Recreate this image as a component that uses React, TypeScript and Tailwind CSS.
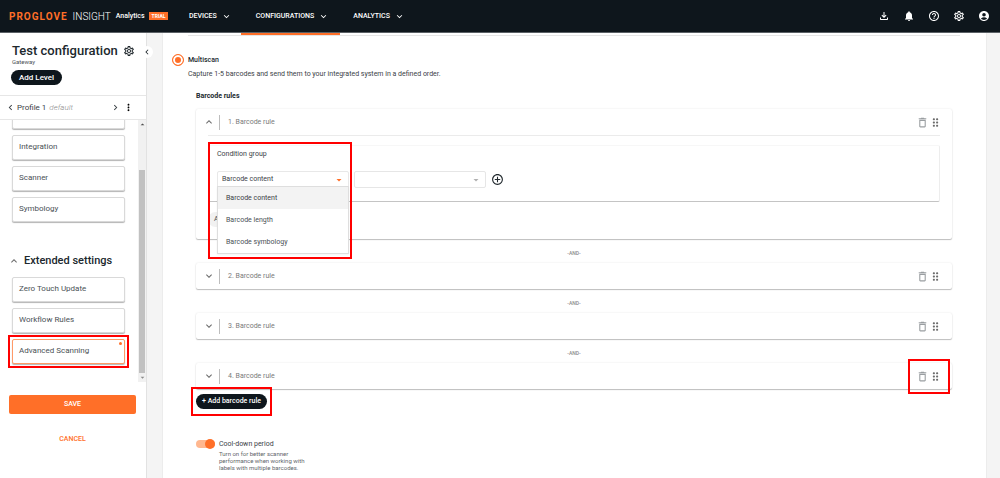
import { useState } from 'react';
import {
  MdAccountCircle,
  MdAddCircleOutline,
  MdArrowDropDown,
  MdArrowDropUp,
  MdChevronLeft,
  MdChevronRight,
  MdDeleteOutline,
  MdDragIndicator,
  MdExpandLess,
  MdExpandMore,
  MdHelpOutline,
  MdMoreVert,
  MdNotifications,
  MdOutlineFileDownload,
  MdOutlineSettings,
} from 'react-icons/md';

const conditionTypes = ['Barcode content', 'Barcode length', 'Barcode symbology'];

const Header = () => (
  <header className="flex h-[33px] shrink-0 items-center border-b border-[#5b6166] bg-[#0e161c] pr-[10px] pl-[9px] text-white">
    <a href="#home" className="flex w-[180px] items-center">
      <span className="text-[10px] font-bold tracking-widest text-[#ff6f28]">PROGLOVE</span>
      <span className="ml-[5px] text-[10px] font-light">INSIGHT</span>
      <span className="ml-[5px] text-[7px] font-medium">Analytics</span>
      <span className="ml-1 bg-[#ff6f28] px-[3px] text-[5px] leading-[8px] font-bold">TRIAL</span>
    </a>
    <nav className="flex flex-1 items-center gap-6 text-[7px] font-medium">
      {['DEVICES', 'CONFIGURATIONS', 'ANALYTICS'].map(item => (
        <button key={item} className="flex items-center gap-1">
          {item}
          <MdExpandMore className="size-[11px]" />
        </button>
      ))}
    </nav>
    <div className="flex items-center gap-[13px]">
      <button aria-label="Downloads"><MdOutlineFileDownload className="size-3" /></button>
      <button aria-label="Notifications"><MdNotifications className="size-3" /></button>
      <button aria-label="Help"><MdHelpOutline className="size-3" /></button>
      <button aria-label="Settings"><MdOutlineSettings className="size-3" /></button>
      <button aria-label="Account"><MdAccountCircle className="size-3" /></button>
    </div>
  </header>
);

const MenuCard = ({ label, active = false }: { label: string; active?: boolean }) => (
  <div className="relative">
    <button
      className={`flex h-[25px] w-full items-center rounded-[2px] border bg-white px-[6px] pb-px text-left text-[8px] text-[#4a5156] shadow-[0_1px_1px_#b4b4b4] ${
        active ? 'border-[#ff9a68]' : 'border-[#d9d9d9]'
      }`}
    >
      {label}
    </button>
    {active && (
      <>
        <span className="absolute top-[3px] right-[3px] size-[3px] rounded-full bg-[#ff6f28]" />
        <span className="pointer-events-none absolute -inset-1 border-2 border-[#ff0000]" />
      </>
    )}
  </div>
);

const Sidebar = () => (
  <aside className="relative z-10 flex w-[147px] shrink-0 flex-col border-r border-[#e2e2e2] bg-white">
    <div className="px-[11px] pt-[11px]">
      <div className="flex items-center justify-between pl-px">
        <h1 className="text-[13px] leading-[14px] font-medium whitespace-nowrap text-[#20282d]">
          Test configuration
        </h1>
        <button aria-label="Configuration settings" className="text-[#20282d]">
          <MdOutlineSettings className="block size-3" />
        </button>
      </div>
      <p className="pl-px text-[6px] leading-[8px] text-[#4a5156]">Gateway</p>
      <button className="mt-1 block h-[15px] rounded-full bg-[#0e161c] px-2 text-[8px] leading-[15px] font-medium text-white">
        Add Level
      </button>
    </div>
    <button
      aria-label="Collapse sidebar"
      className="absolute top-[13px] -right-[7px] flex size-3 items-center justify-center rounded-full bg-white text-[#20282d]"
    >
      <MdChevronLeft className="size-[10px]" />
    </button>

    <div className="mt-[10px] flex h-[25px] items-center border-y border-[#e6e6e6] pr-3 pl-[5px] text-[8px] text-[#3b4247]">
      <button aria-label="Previous profile"><MdChevronLeft className="size-[11px]" /></button>
      <span className="ml-[1px]">Profile 1</span>
      <span className="ml-[3px] flex-1 font-light text-[#8b8b8b] italic">default</span>
      <button aria-label="Next profile"><MdChevronRight className="size-[11px]" /></button>
      <button aria-label="Profile menu" className="ml-[2px] text-black"><MdMoreVert className="size-[11px]" /></button>
    </div>

    <div className="flex h-[262px] overflow-hidden">
      <div className="-mt-4 flex-1 pr-[13px] pl-3">
        <div className="flex flex-col gap-[6px]">
          <MenuCard label="Gateway" />
          <MenuCard label="Integration" />
          <MenuCard label="Scanner" />
          <MenuCard label="Symbology" />
        </div>
        <button className="mt-8 -ml-1 flex items-center gap-1 text-[11px] leading-[14px] font-medium text-[#20282d]">
          <MdExpandLess className="size-3 text-[#6b6b6b]" />
          Extended settings
        </button>
        <div className="mt-[9px] flex flex-col gap-[6px]">
          <MenuCard label="Zero Touch Update" />
          <MenuCard label="Workflow Rules" />
          <MenuCard label="Advanced Scanning" active />
        </div>
      </div>
      <div className="flex w-2 flex-col items-center bg-[#f1f1f1] text-[#505050]">
        <MdArrowDropUp className="size-[9px]" />
        <div className="mt-[41px] w-[6px] flex-1 bg-[#c1c1c1]" />
        <MdArrowDropDown className="size-[9px] text-[#8a8a8a]" />
      </div>
    </div>

    <div className="flex flex-col items-center gap-4 pt-[13px] pr-[10px] pl-[9px] text-[7px] font-medium">
      <button className="h-[19px] w-full rounded-[2px] bg-[#ff6f28] text-white">SAVE</button>
      <button className="h-[19px] w-full text-[#ff6f28]">CANCEL</button>
    </div>
  </aside>
);

const RuleHeader = ({ index, open, marked }: { index: number; open: boolean; marked: boolean }) => (
  <div className="flex h-[26px] items-center pr-[10px] pl-[7px] text-[#6b6b6b]">
    <button aria-label={open ? 'Collapse rule' : 'Expand rule'} aria-expanded={open}>
      {open ? <MdExpandLess className="size-3" /> : <MdExpandMore className="size-3" />}
    </button>
    <span className="ml-1 h-[15px] border-l border-[#bdbdbd]" />
    <span className="ml-2 flex-1 text-[7px] text-[#7a7a7a]">{index}. Barcode rule</span>
    <div className="relative flex items-center">
      <button aria-label="Delete rule" className="text-[#9a9ea1]">
        <MdDeleteOutline className="block size-[13px]" />
      </button>
      <button aria-label="Move rule">
        <MdDragIndicator className="block size-[13px]" />
      </button>
      {marked && (
        <span className="pointer-events-none absolute -inset-x-2 -inset-y-[11px] border-2 border-[#ff0000]" />
      )}
    </div>
  </div>
);

const ConditionGroup = () => {
  const [type, setType] = useState(conditionTypes[0]);

  return (
    <div className="relative mx-3 mt-[9px] h-[57px] rounded-[2px] border border-t-[#f7f7f7] border-r-[#ededed] border-b-[#c4c4c4] border-l-[#f3f3f3] px-2 pt-1">
      <h3 className="text-[7px] leading-[8px] text-[#3b4247]">Condition group</h3>
      <div className="mt-[13px] flex items-center">
        <div className="relative w-[132px]">
          <select
            aria-label="Condition type"
            value={type}
            onChange={e => setType(e.target.value)}
            className="block h-[17px] w-full appearance-none rounded-[2px] border border-[#e8e8e8] bg-white px-1 text-[7px] text-[#3b4247]"
          >
            {conditionTypes.map(t => <option key={t}>{t}</option>)}
          </select>
          <MdArrowDropDown className="pointer-events-none absolute top-[3px] right-1 size-3 text-[#ff6f28]" />
          <ul
            role="listbox"
            aria-label="Condition types"
            className="absolute top-[15px] left-0 z-10 h-[68px] w-full border border-[#dedede] bg-white text-[7px] leading-[22px] text-[#4a5156] shadow-xs"
          >
            {conditionTypes.map(t => (
              <li
                key={t}
                role="option"
                aria-selected={t === type}
                onClick={() => setType(t)}
                className={`px-2 ${t === type ? 'bg-[#f3f3f3] text-[#3b4247]' : ''}`}
              >
                {t}
              </li>
            ))}
          </ul>
        </div>
        <div className="relative ml-[5px] w-[132px]">
          <select
            aria-label="Condition value"
            className="block h-[17px] w-full appearance-none rounded-[2px] border border-[#e6e6e6] bg-white px-1 text-[7px]"
          >
            <option value=""></option>
          </select>
          <MdArrowDropDown className="pointer-events-none absolute top-[3px] right-1 size-3 text-[#b0b0b0]" />
        </div>
        <button aria-label="Add condition" className="ml-[5px] text-[#20282d]">
          <MdAddCircleOutline className="block size-[13px]" />
        </button>
      </div>
      <span className="pointer-events-none absolute -top-1 -left-px z-20 h-[117px] w-[144px] border-2 border-[#ff0000]" />
    </div>
  );
};

const RuleCard = ({ index, open = false, marked = false }: { index: number; open?: boolean; marked?: boolean }) => (
  <section className="rounded-[2px] bg-white shadow-[0_1px_1px_#bdbdbd,0_0_2px_#e4e4e4]">
    <RuleHeader index={index} open={open} marked={marked} />
    {open && (
      <>
        <div className="mx-3 border-t border-[#ebebeb]" />
        <ConditionGroup />
        <div className="flex px-3 pt-[10px] pb-3">
          <button className="h-[15px] rounded-full bg-[#f1f1f1] px-[6px] text-[7px] leading-[15px] text-[#4a5156]">
            Add
          </button>
        </div>
      </>
    )}
  </section>
);

const And = () => (
  <div className="flex h-6 items-center justify-center pt-[6px] text-[5px] font-medium text-[#8b8b8b]">-AND-</div>
);

const Multiscan = () => {
  const [coolDown, setCoolDown] = useState(true);

  return (
    <main className="mr-[13px] ml-[15px] min-w-0 flex-1 border-x border-[#ececec] bg-white pr-[26px] pl-[25px]">
      <div className="border-b border-[#e6e6e6]">
        <div className="ml-[53px] h-[2px] w-[99px] bg-[#ff6f28]" />
      </div>

      <label className="-ml-4 mt-[18px] flex items-center gap-1 text-[7px] leading-[12px] font-medium text-[#20282d]">
        <input
          type="radio"
          name="mode"
          defaultChecked
          className="size-3 appearance-none rounded-full border border-[#ff6f28] bg-[#ff6f28] shadow-[inset_0_0_0_2px_#ffffff]"
        />
        Multiscan
      </label>
      <p className="mt-[2px] text-[7px] leading-[12px] text-[#3b4247]">
        Capture 1-5 barcodes and send them to your integrated system in a defined order.
      </p>

      <div className="px-2">
        <h2 className="mt-[10px] text-[7px] leading-[12px] font-bold text-[#20282d]">Barcode rules</h2>
        <div className="mt-[7px]">
          <RuleCard index={1} open />
          <And />
          <RuleCard index={2} />
          <And />
          <RuleCard index={3} />
          <And />
          <RuleCard index={4} marked />
        </div>
        <div className="relative mt-[5px] w-fit">
          <button className="block h-[15px] rounded-full bg-[#0e161c] px-[6px] text-[7px] leading-[15px] font-medium text-white">
            + Add barcode rule
          </button>
          <span className="pointer-events-none absolute -inset-x-[5px] -inset-y-[7px] border-2 border-[#ff0000]" />
        </div>

        <div className="mt-[29px] flex items-start gap-1">
          <input
            id="cool-down"
            type="checkbox"
            role="switch"
            checked={coolDown}
            onChange={e => setCoolDown(e.target.checked)}
            className="relative mt-[2px] h-2 w-[19px] appearance-none rounded-full bg-[#ffb78f] before:absolute before:-top-px before:left-0 before:size-[10px] before:rounded-full before:bg-[#ff6f28] checked:before:left-[9px]"
          />
          <div>
            <label htmlFor="cool-down" className="block text-[7px] leading-[12px] text-[#3b4247]">
              Cool-down period
            </label>
            <p className="w-[96px] text-[6px] leading-[7px] text-[#5f666b]">
              Turn on for better scanner performance when working with labels with multiple barcodes.
            </p>
          </div>
        </div>
      </div>
    </main>
  );
};

export default function App() {
  return (
    <div className="flex min-h-screen flex-col bg-[#f4f4f4] font-['Roboto',sans-serif]">
      <Header />
      <div className="flex flex-1">
        <Sidebar />
        <Multiscan />
      </div>
    </div>
  );
}
